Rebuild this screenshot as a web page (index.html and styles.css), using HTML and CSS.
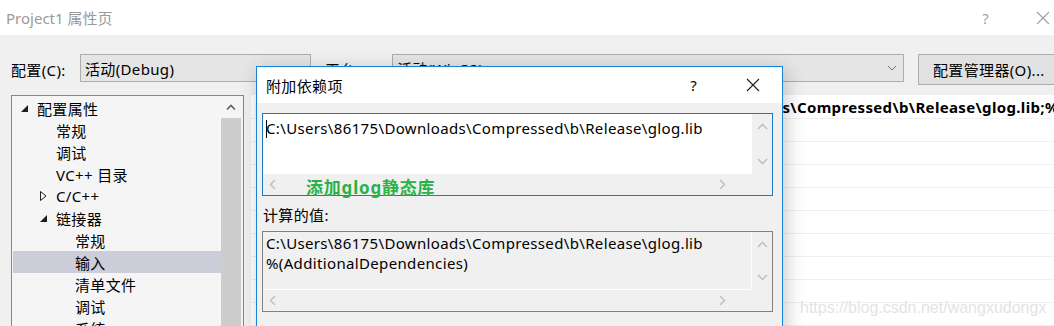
FILE: index.html
```html
<!DOCTYPE html>
<html lang="zh-CN">
<head>
    <meta charset="UTF-8">
    <title>Project1 属性页</title>
    <link rel="stylesheet" href="styles.css">
</head>
<body>
    <div class="titlebar">
        <span class="title">Project1 属性页</span>
        <span class="cap-help">?</span>
        <span class="cap-close">
            <svg width="14" height="14" viewBox="0 0 14 14"><path d="M1 1L13 13M13 1L1 13" stroke="#a0a0a0" stroke-width="1.1" fill="none"/></svg>
        </span>
    </div>

    <div class="config-row">
        <span class="label-config">配置(C):</span>
        <div class="combo combo-config">活动(Debug)</div>
        <span class="label-platform">平台(P):</span>
        <div class="combo combo-platform">
            <span>活动(Win32)</span>
            <svg class="combo-arrow" width="10" height="6" viewBox="0 0 10 6"><path d="M1 1L5 5L9 1" stroke="#707070" stroke-width="1" fill="none"/></svg>
        </div>
        <button class="btn-manager">配置管理器(O)...</button>
    </div>

    <div class="panes">
        <div class="tree">
            <ul class="tree-list">
                <li class="lvl0"><span class="toggle"><svg width="7" height="7" viewBox="0 0 7 7"><polygon points="7,0 7,7 0,7" fill="#1e1e1e"/></svg></span>配置属性</li>
                <li class="lvl1"><span class="toggle"></span>常规</li>
                <li class="lvl1"><span class="toggle"></span>调试</li>
                <li class="lvl1"><span class="toggle"></span>VC++ 目录</li>
                <li class="lvl1"><span class="toggle"><svg width="7" height="10" viewBox="0 0 7 10"><polygon points="0.5,0.5 6,5 0.5,9.5" fill="none" stroke="#1e1e1e" stroke-width="1"/></svg></span>C/C++</li>
                <li class="lvl1"><span class="toggle"><svg width="7" height="7" viewBox="0 0 7 7"><polygon points="7,0 7,7 0,7" fill="#1e1e1e"/></svg></span>链接器</li>
                <li class="lvl2"><span class="toggle"></span>常规</li>
                <li class="lvl2 selected"><span class="toggle"></span>输入</li>
                <li class="lvl2"><span class="toggle"></span>清单文件</li>
                <li class="lvl2"><span class="toggle"></span>调试</li>
                <li class="lvl2"><span class="toggle"></span>系统</li>
            </ul>
            <div class="tree-scroll">
                <div class="scroll-btn">
                    <svg width="10" height="6" viewBox="0 0 10 6"><path d="M1 5.5L5 1.5L9 5.5" stroke="#606060" stroke-width="1.6" fill="none"/></svg>
                </div>
                <div class="scroll-thumb"></div>
            </div>
        </div>

        <div class="grid">
            <div class="grid-row first"><span class="grid-name">附加依赖项</span><span class="grid-value">C:\Users\86175\Downloads\Compressed\b\Release\glog.lib;%(AdditionalDependencies)</span></div>
            <div class="grid-row"></div>
            <div class="grid-row"></div>
            <div class="grid-row"></div>
            <div class="grid-row"></div>
            <div class="grid-row"></div>
            <div class="grid-row"></div>
            <div class="grid-row"></div>
            <div class="grid-row"></div>
            <div class="grid-row"></div>
        </div>
    </div>

    <div class="watermark">https://blog.csdn.net/wangxudongx</div>

    <!-- modal: 附加依赖项 -->
    <div class="dialog">
        <div class="dlg-title">
            <span>附加依赖项</span>
            <span class="dlg-help">?</span>
            <span class="dlg-close">
                <svg width="14" height="14" viewBox="0 0 14 14"><path d="M1 1L13 13M13 1L1 13" stroke="#1e1e1e" stroke-width="1.1" fill="none"/></svg>
            </span>
        </div>
        <div class="dlg-body">
            <div class="textbox edit">
                <div class="tb-content"><span class="caret"></span>C:\Users\86175\Downloads\Compressed\b\Release\glog.lib</div>
                <div class="tb-vscroll">
                    <svg width="11" height="7" viewBox="0 0 11 7"><path d="M1 6L5.5 1.5L10 6" stroke="#c2c2c2" stroke-width="1.6" fill="none"/></svg>
                    <svg width="11" height="7" viewBox="0 0 11 7"><path d="M1 1L5.5 5.5L10 1" stroke="#c2c2c2" stroke-width="1.6" fill="none"/></svg>
                </div>
                <div class="tb-hscroll">
                    <svg width="7" height="11" viewBox="0 0 7 11"><path d="M6 1L1.5 5.5L6 10" stroke="#c2c2c2" stroke-width="1.6" fill="none"/></svg>
                    <svg width="7" height="11" viewBox="0 0 7 11"><path d="M1 1L5.5 5.5L1 10" stroke="#c2c2c2" stroke-width="1.6" fill="none"/></svg>
                </div>
                <div class="tb-corner"></div>
                <span class="note">添加glog静态库</span>
            </div>

            <div class="calc-label">计算的值:</div>

            <div class="textbox readonly">
                <div class="tb-content">C:\Users\86175\Downloads\Compressed\b\Release\glog.lib<br>%(AdditionalDependencies)</div>
                <div class="tb-vscroll">
                    <svg width="11" height="7" viewBox="0 0 11 7"><path d="M1 6L5.5 1.5L10 6" stroke="#c2c2c2" stroke-width="1.6" fill="none"/></svg>
                    <svg width="11" height="7" viewBox="0 0 11 7"><path d="M1 1L5.5 5.5L10 1" stroke="#c2c2c2" stroke-width="1.6" fill="none"/></svg>
                </div>
                <div class="tb-hscroll">
                    <svg width="7" height="11" viewBox="0 0 7 11"><path d="M6 1L1.5 5.5L6 10" stroke="#c2c2c2" stroke-width="1.6" fill="none"/></svg>
                    <svg width="7" height="11" viewBox="0 0 7 11"><path d="M1 1L5.5 5.5L1 10" stroke="#c2c2c2" stroke-width="1.6" fill="none"/></svg>
                </div>
                <div class="tb-corner"></div>
            </div>
        </div>
    </div>
</body>
</html>
```

FILE: styles.css
```css
body {
    margin: 0;
    width: 1054px;
    height: 326px;
    overflow: hidden;
    position: relative;
    background: #f0f0f0;
    color: #000;
    font-family: "Noto Sans", "Noto Sans CJK SC", sans-serif;
    font-size: 15px;
    letter-spacing: 0.35px;
}

/* Window title bar */
.titlebar {
    height: 35px;
    background: #fff;
    display: flex;
    align-items: center;
    padding-left: 6px;
    color: #9a9a9a;
}

.title {
    font-size: 15px;
    letter-spacing: 0;
}

.cap-help {
    margin-left: auto;
    font-size: 15px;
    color: #a0a0a0;
    margin-right: 47px;
}

.cap-close {
    display: flex;
    width: 18px;
}

/* Configuration row */
.config-row {
    display: flex;
    align-items: center;
    padding: 19px 0 0 11px;
    height: 31px;
    white-space: nowrap;
}

.config-row > * {
    flex-shrink: 0;
}

.label-config {
    width: 69px;
}

.combo {
    box-sizing: border-box;
    height: 28px;
    border: 1px solid #adadad;
    background: #e5e5e5;
    padding-left: 4px;
    display: flex;
    align-items: center;
    align-self: flex-start;
}

.combo-config {
    width: 231px;
}

.label-platform {
    margin-left: 14px;
    width: 67px;
}

.combo-platform {
    width: 512px;
    padding-right: 6px;
}

.combo-arrow {
    margin-left: auto;
}

.btn-manager {
    margin-left: 14px;
    height: 31px;
    align-self: flex-start;
    border: 1px solid #adadad;
    background: #e1e1e1;
    padding: 0 14px;
    font-family: inherit;
    font-size: 15px;
    letter-spacing: 0.35px;
    white-space: nowrap;
}

/* Tree + property grid */
.panes {
    display: flex;
    margin-top: 10px;
    padding-left: 11px;
}

.tree {
    width: 233px;
    height: 240px;
    box-sizing: border-box;
    border: 1px solid #828790;
    background: #f5f5f5;
    display: flex;
    flex-shrink: 0;
}

.tree-list {
    list-style: none;
    margin: 0;
    padding: 1px 0 0 1px;
    width: 208px;
}

.tree-list li {
    height: 22px;
    display: flex;
    align-items: center;
    padding-left: 8px;
    white-space: nowrap;
}

.tree-list li.lvl1 {
    padding-left: 27px;
}

.tree-list li.lvl2 {
    padding-left: 46px;
}

.tree-list li.selected {
    background: #cbcdd9;
}

.toggle {
    width: 16px;
    display: flex;
    align-items: center;
}

.tree-scroll {
    width: 20px;
    display: flex;
    flex-direction: column;
}

.scroll-btn {
    height: 22px;
    display: flex;
    align-items: center;
    justify-content: center;
}

.scroll-thumb {
    flex: 1;
    background: #cdcdcd;
}

.grid {
    flex: 1;
    margin-left: 7px;
    background: #fff;
    overflow: hidden;
    white-space: nowrap;
}

.grid-row {
    height: 23px;
    box-sizing: border-box;
    border-bottom: 1px solid #eef0f4;
    display: flex;
    align-items: center;
}

.grid-row.first {
    margin-top: 1px;
}

.grid-name {
    width: 323px;
    flex-shrink: 0;
    padding-left: 4px;
}

.grid-value {
    font-weight: bold;
    padding-left: 4px;
}

.watermark {
    position: absolute;
    left: 800px;
    top: 299px;
    font-family: "Liberation Sans", Arial, sans-serif;
    font-size: 16px;
    letter-spacing: 0;
    color: #e4e4e4;
}

/* Modal dialog */
.dialog {
    position: absolute;
    left: 256px;
    top: 66px;
    width: 527px;
    height: 300px;
    box-sizing: border-box;
    border: 1px solid #1883d7;
    background: #f0f0f0;
    box-shadow: 3px 4px 18px rgba(0, 0, 0, 0.22);
}

.dlg-title {
    height: 36px;
    background: #fff;
    display: flex;
    align-items: center;
    padding-left: 9px;
}

.dlg-help {
    margin-left: auto;
    margin-right: 49px;
}

.dlg-close {
    display: flex;
    margin-right: 22px;
}

.dlg-body {
    padding: 10px 0 0 5px;
}

.textbox {
    position: relative;
    width: 511px;
    box-sizing: border-box;
    display: grid;
    grid-template-columns: 1fr 20px;
    grid-template-rows: 1fr 21px;
}

.textbox.edit {
    height: 83px;
    border: 1px solid #1979ca;
}

.textbox.readonly {
    height: 81px;
    border: 1px solid #828282;
}

.tb-content {
    white-space: nowrap;
    overflow: hidden;
    padding: 4px 0 0 3px;
    line-height: 20px;
}

.edit .tb-content {
    background: #fff;
}

.readonly .tb-content {
    padding-top: 1px;
    border-right: 1px solid #fff;
    border-bottom: 1px solid #fff;
}

.caret {
    display: inline-block;
    width: 1px;
    height: 18px;
    background: #000;
    vertical-align: -4px;
    margin-right: -1px;
}

.tb-vscroll {
    display: flex;
    flex-direction: column;
    justify-content: space-between;
    align-items: center;
    padding: 9px 0 9px 0;
}

.tb-hscroll {
    display: flex;
    justify-content: space-between;
    align-items: center;
    padding: 0 26px 0 6px;
}

.note {
    position: absolute;
    left: 43px;
    top: 60px;
    color: #2bb148;
    font-weight: bold;
    font-size: 17px;
    letter-spacing: 0.8px;
    white-space: nowrap;
}

.calc-label {
    margin-top: 9px;
    height: 26px;
    line-height: 20px;
    padding-left: 1px;
}
```
